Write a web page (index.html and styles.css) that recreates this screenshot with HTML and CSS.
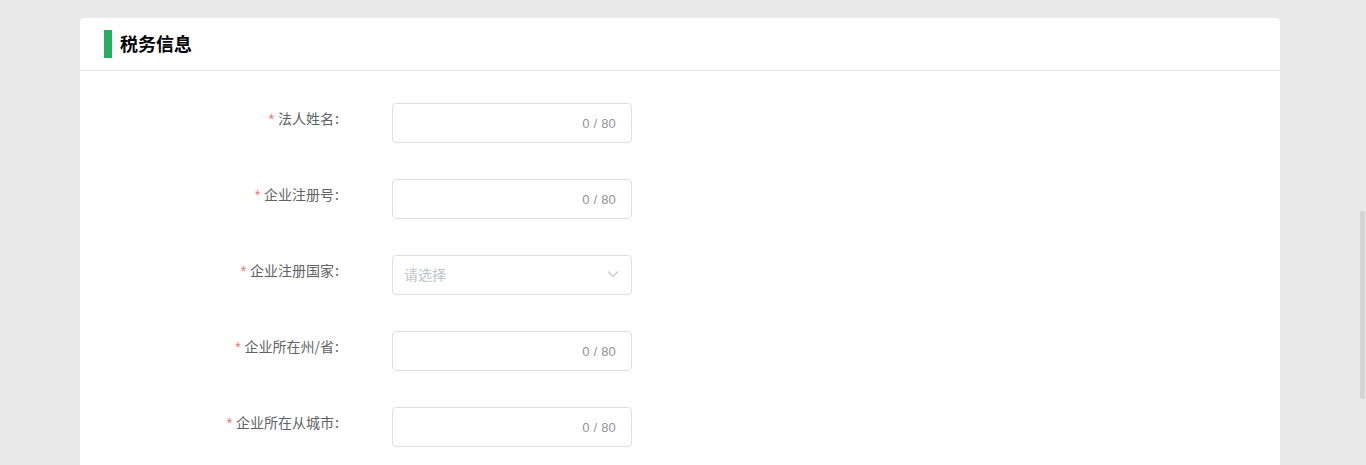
FILE: index.html
```html
<!DOCTYPE html>
<html lang="zh-CN">
<head>
<meta charset="utf-8">
<title>税务信息</title>
<link rel="stylesheet" href="styles.css">
</head>
<body>
<div class="page">
  <section class="card">
    <header class="card-header">
      <span class="mark"></span>
      <h2 class="title">税务信息</h2>
    </header>
    <form class="form">
      <div class="row">
        <label class="label"><span class="req">*</span>法人姓名<span class="colon">:</span></label>
        <div class="input"><span class="count">0 / 80</span></div>
      </div>
      <div class="row">
        <label class="label"><span class="req">*</span>企业注册号<span class="colon">:</span></label>
        <div class="input"><span class="count">0 / 80</span></div>
      </div>
      <div class="row">
        <label class="label"><span class="req">*</span>企业注册国家<span class="colon">:</span></label>
        <div class="input select">
          <span class="placeholder">请选择</span>
          <svg class="chevron" width="12" height="12" viewBox="0 0 12 12"><path d="M1 3.5 L6 8.5 L11 3.5" fill="none" stroke="#c0c4cc" stroke-width="1.1"/></svg>
        </div>
      </div>
      <div class="row">
        <label class="label"><span class="req">*</span>企业所在州/省<span class="colon">:</span></label>
        <div class="input"><span class="count">0 / 80</span></div>
      </div>
      <div class="row">
        <label class="label"><span class="req">*</span>企业所在从城市<span class="colon">:</span></label>
        <div class="input"><span class="count">0 / 80</span></div>
      </div>
    </form>
  </section>
</div>
<div class="scroll-thumb"></div>
</body>
</html>
```

FILE: styles.css
```css
html, body {
  margin: 0;
  padding: 0;
  height: 100%;
  overflow: hidden;
}
body {
  background: #e9e9e9;
  font-family: "Liberation Sans", "Noto Sans CJK SC", sans-serif;
  color: #606266;
}
.page {
  padding: 18px 86px 0 80px;
}
.card {
  background: #fff;
  border-radius: 4px 4px 0 0;
  min-height: 460px;
}
.card-header {
  height: 52px;
  border-bottom: 1px solid #e6e6e6;
  display: flex;
  align-items: center;
  padding-left: 24px;
}
.mark {
  width: 8px;
  height: 28px;
  background: #27ae60;
  margin-right: 8px;
}
.title {
  margin: 0 0 3px 0;
  font-size: 18px;
  font-weight: 700;
  color: #000;
  font-family: "Noto Sans CJK SC", sans-serif;
  line-height: 28px;
}
.form {
  padding-top: 32px;
}
.row {
  display: grid;
  grid-template-columns: 262px 240px;
  column-gap: 50px;
  margin-bottom: 36px;
}
.label {
  text-align: right;
  font-size: 14px;
  line-height: 31px;
  color: #606266;
  font-family: "Noto Sans CJK SC", sans-serif;
  padding-right: 3px;
}
.colon {
  margin-left: 1px;
}
.req {
  color: #f56c6c;
  margin-right: 4px;
  font-family: "Liberation Sans", sans-serif;
}
.input {
  box-sizing: border-box;
  height: 40px;
  border: 1px solid #dcdfe6;
  border-radius: 4px;
  display: flex;
  align-items: center;
  justify-content: flex-end;
  padding: 0 15px 0 11px;
}
.count {
  font-size: 13px;
  color: #909399;
  letter-spacing: 0.2px;
}
.select {
  justify-content: space-between;
  padding-right: 12px;
}
.placeholder {
  font-size: 14px;
  color: #c0c4cc;
  font-family: "Noto Sans CJK SC", sans-serif;
  margin-bottom: 2px;
}
.chevron {
  margin-bottom: 2px;
}
.scroll-thumb {
  position: fixed;
  left: 1360px;
  top: 211px;
  width: 5px;
  height: 188px;
  border-radius: 3px;
  background: #d3d3d3;
}
```
